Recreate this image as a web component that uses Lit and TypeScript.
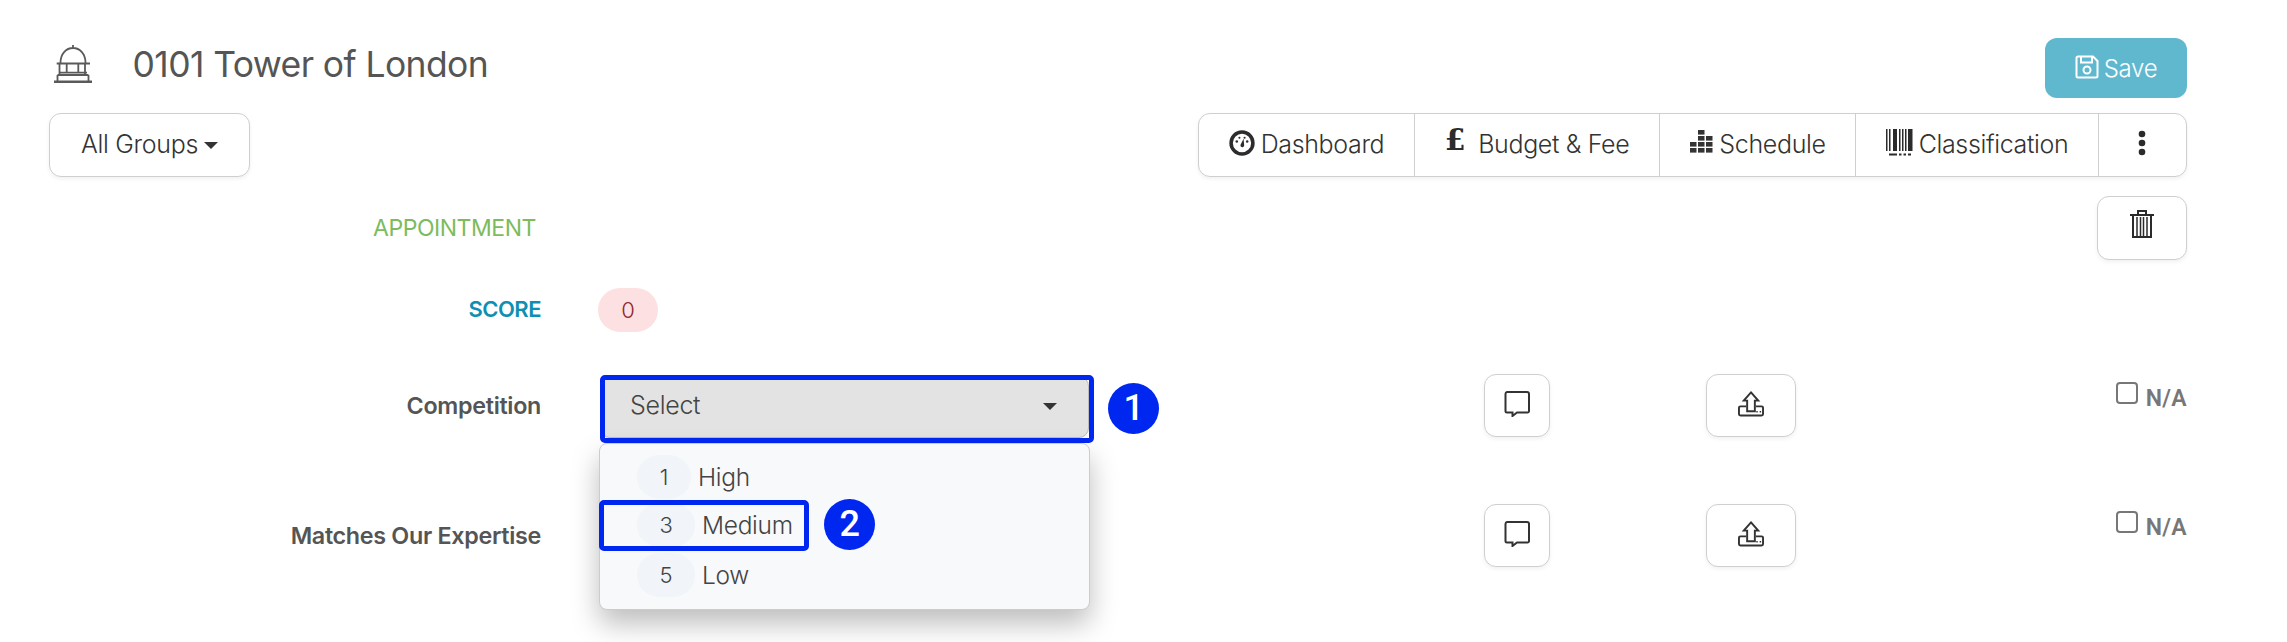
import { LitElement, html, css, svg } from "lit";
import { customElement } from "lit/decorators.js";

const building = html`<svg class="bld" width="38" height="38" viewBox="0 0 38 38" fill="none" stroke="#5a5a5a" stroke-width="1.800">
  <path d="M19 0v3M6.500 17.500C6.500 9 12 3 19 3s12.500 6 12.500 14.500M2.700 18.500h33.300M5.500 19v11M12.700 19v9M24.300 19v9M31 19v11M5 27.700h28M3.500 30h31M3.500 30v6M34.500 30v6" />
  <path d="M0 36.700h38" stroke-width="2.600" />
</svg>`;

const gauge = html`<svg width="26" height="26" viewBox="0 0 25 25"><circle cx="12.500" cy="12.500" r="10.500" fill="#fff" stroke="#2c2c2c" stroke-width="3.400"/>
  <g fill="#2c2c2c"><circle cx="7.500" cy="11" r="1.200"/><circle cx="10" cy="7.500" r="1"/><circle cx="17.500" cy="11" r="1.200"/><circle cx="15" cy="7.500" r="1"/><path d="M11 14.500l3-6 .6 6.500a1.800 1.800 0 0 1-3.600-.5z"/></g></svg>`;

const sched = html`<svg width="25" height="25" viewBox="0 0 25 25" fill="#333">
  ${[[9, 0], [9, 6], [9, 12], [9, 18], [17, 6], [17, 12], [17, 18], [1, 12], [1, 18]].map(
    ([x, y]) => svg`<rect x=${x} y=${y} width="6.500" height="4.600" />`
  )}
</svg>`;

const barcode = html`<svg width="28" height="27" viewBox="0 0 28 27" fill="#2b2b2b">
  <rect x="0" y="0" width="1.500" height="22"/><rect x="3" y="0" width="1.500" height="22"/><rect x="7" y="0" width="4" height="22"/><rect x="13" y="0" width="1.500" height="22"/><rect x="16" y="0" width="1.500" height="22"/><rect x="19" y="0" width="1.500" height="22"/><rect x="22" y="0" width="4.500" height="22"/>
  <rect x="3" y="24.500" width="8" height="2"/><rect x="13" y="24.500" width="2.500" height="2"/><rect x="17.500" y="24.500" width="2.500" height="2"/><rect x="22" y="24.500" width="3" height="2"/>
</svg>`;

const dots = html`<svg width="10" height="26" viewBox="0 0 10 26" fill="#2b2b2b"><circle cx="5" cy="4" r="3.300"/><circle cx="5" cy="13" r="3.300"/><circle cx="5" cy="22" r="3.300"/></svg>`;

const trash = html`<svg width="24" height="28" viewBox="0 0 24 28" fill="none" stroke="#2b2b2b" stroke-width="2">
  <path d="M0 5h24M8 4V1h8V4M3 6v21h18V6"/><path d="M7 7v20M10.500 7v20M13.500 7v20M17 7v20" stroke-width="1.500"/>
</svg>`;

const comment = html`<svg width="26" height="26" viewBox="0 0 26 26" fill="none" stroke="#333" stroke-width="2"><path d="M3 1h20a2 2 0 0 1 2 2v17a1.500 1.500 0 0 1-1.500 1.500H13l-4.500 3.500v-3.500H3A1.500 1.500 0 0 1 1.500 20V3A2 2 0 0 1 3 1z"/></svg>`;

const upload = html`<svg width="26" height="26" viewBox="0 0 27 27" fill="none" stroke="#333" stroke-width="2"><path d="M8.500 16H2.500a1.500 1.500 0 0 0-1.500 1.500v6.500a1.500 1.500 0 0 0 1.500 1.500h22a1.500 1.500 0 0 0 1.500-1.500v-6.500a1.500 1.500 0 0 0-1.500-1.500h-6"/><path d="M13.500 1.500L21 10h-3.500v11h-8V10H6z" fill="#fff"/><path d="M19 21.500h1.500M22.500 21.500h1.500" stroke-width="1.500"/></svg>`;

const floppy = html`<svg width="24" height="24" viewBox="0 0 24 24" fill="none" stroke="#fff" stroke-width="2"><path d="M3 1.500h15l4.500 4.500v15a1.500 1.500 0 0 1-1.500 1.500H3A1.500 1.500 0 0 1 1.500 21V3A1.500 1.500 0 0 1 3 1.500z"/><path d="M6 1.500v6h11v-6"/><circle cx="12" cy="15" r="3.500"/></svg>`;

@customElement("app-root")
export class AppRoot extends LitElement {
  static styles = css`
    :host {
      display: block;
      height: 642px;
      overflow: hidden;
      box-sizing: border-box;
      padding: 38px 100px 0 49px;
      background: #fff;
      font-family: Inter, "Liberation Sans", sans-serif;
      font-weight: 300;
      color: #333;
    }
    .head { display: flex; align-items: center; height: 60px; }
    .bld { margin-left: 5px; flex: none; margin-top: -8px; }
    .title { margin-left: 40.500px; font-size: 35.500px; line-height: 44px; margin-top: -6px; font-weight: 400; color: #555; letter-spacing: -0.600px; white-space: nowrap; }
    .save {
      margin-left: auto; width: 142px; height: 60px; box-sizing: border-box;
      background: #60b8cf; border-radius: 12px; color: #fff;
      display: flex; align-items: center; justify-content: center; gap: 5px;
      font-size: 24px; letter-spacing: -0.300px;
    }
    .save svg { margin-top: -2px; }
    .tools { display: flex; justify-content: space-between; margin-top: 15px; }
    .box {
      box-sizing: border-box; border: 1.500px solid #cfcfcf; border-radius: 12px; background: #fff;
      box-shadow: 0 2px 4px rgba(0, 0, 0, 0.06);
      display: flex; align-items: center; justify-content: center;
    }
    .groups { width: 201px; height: 64px; font-size: 25px; gap: 6px; letter-spacing: -0.300px; padding-bottom: 2px; }
    .caret { width: 0; height: 0; border-left: 7.500px solid transparent; border-right: 7.500px solid transparent; border-top: 7.500px solid #333; margin-top: 3px; }
    .tabs { display: flex; height: 64px; width: 989px; padding: 0; justify-content: flex-start; }
    .tab { display: flex; align-items: center; justify-content: center; height: 100%; gap: 5px; font-size: 25px; letter-spacing: -0.350px; border-right: 1.500px solid #cfcfcf; box-sizing: border-box; white-space: nowrap; padding-bottom: 2px; }
    .tab:last-child { border-right: 0; }
    .t1 { width: 216px; gap: 6px; }
    .t1 svg { margin-top: -3px; }
    .t2 { width: 245px; gap: 13px; }
    .t3 { width: 196px; }
    .t4 { width: 243px; }
    .t5 { flex: 1; padding-right: 2px; }
    .t5 svg { margin-top: -2px; }
    .pound { font-family: "DejaVu Serif", serif; font-weight: 700; font-size: 30px; line-height: 1; margin-top: -9px; color: #2b2b2b; }
    .t3 svg, .t4 svg { margin-top: -4px; }
    .row { display: flex; align-items: center; }
    .label { width: 492px; flex: none; text-align: right; white-space: nowrap; }
    .r-appt { margin-top: 19px; height: 64px; }
    .appt { width: 487px; color: #7dbb5b; font-weight: 400; font-size: 23px; letter-spacing: -0.450px; }
    .trash { width: 90px; height: 64px; margin-left: auto; padding-bottom: 8px; }
    .r-score { margin-top: 28px; height: 44px; }
    .score { color: #0f8fb2; font-weight: 600; font-size: 22px; letter-spacing: -0.500px; margin-top: -2px; }
    .pill { margin-left: 57px; width: 60px; height: 44px; border-radius: 22px; background: #fde0e1; color: #8f2730; font-size: 22px; display: flex; align-items: center; justify-content: center; }
    .r-q { height: 63px; }
    .r1 { margin-top: 42px; }
    .r2 { margin-top: 67px; }
    .q { font-weight: 600; color: #555; font-size: 23.300px; letter-spacing: -0.300px; }
    .sel {
      position: relative; margin: 2px 0 0 59px; width: 489px; height: 62px; box-sizing: border-box; flex: none;
      background: #e3e3e3; border-radius: 10px; border: 1px solid #bbb;
      display: flex; align-items: center; justify-content: space-between;
      padding: 0 30px 3px 29px; font-size: 25px; letter-spacing: -0.300px; color: #444;
    }
    .sel .caret { margin-right: 1px; border-left-width: 7.500px; border-right-width: 7.500px; border-top-width: 7px; margin-top: 2px; }
    .sel2 { background: #fff; }
    .c-btn { width: 66px; height: 63px; margin-left: 395px; flex: none; padding-bottom: 3px; }
    .u-btn { width: 90px; height: 63px; margin-left: 156px; flex: none; padding-bottom: 3px; }
    .na { margin-left: auto; display: flex; gap: 8px; color: #777; font-weight: 600; font-size: 23px; font-family: Roboto, sans-serif; letter-spacing: 0.300px; align-self: flex-start; margin-top: 8px; }
    .r2 .na { margin-top: 7px; }
    .chk { width: 22px; height: 22px; box-sizing: border-box; border: 2px solid #777; border-radius: 4px; background: #fff; }
    .na span { margin-top: 7px; line-height: 19px; }
    .ring {
      position: absolute; box-sizing: border-box; border: 5px solid #0027f0; border-radius: 5px; z-index: 5; pointer-events: none;
    }
    .ring1 { left: -1px; top: -2px; width: 494px; height: 68px; }
    .num {
      position: absolute; width: 51px; height: 51px; border-radius: 50%; background: #0027f0; color: #fff; z-index: 6;
      display: flex; align-items: center; justify-content: center;
      font-family: Roboto, sans-serif; font-weight: 500; font-size: 36px; line-height: 1;
    }
    .n1 { left: 507px; top: 6px; }
    .menu {
      position: absolute; left: -2px; top: 66px; width: 491px; height: 167px; box-sizing: border-box; z-index: 4;
      background: #f8f9fb; border: 1px solid #ccc; border-radius: 8px;
      box-shadow: 0 14px 28px rgba(0, 0, 0, 0.26);
      padding: 11px 0 0 37px; display: flex; flex-direction: column; gap: 4px; color: #444;
    }
    .item { display: flex; align-items: center; gap: 7px; height: 44px; font-size: 24.500px; letter-spacing: -0.300px; color: #444; }
    .item + .item + .item { margin-top: 2px; }
    .badge { height: 44px; width: 58px; border-radius: 22px; background: #f1f4f9; display: flex; align-items: center; justify-content: center; font-size: 22px; }
    .item:first-child .badge { width: 54px; }
    .m-ring { position: relative; }
    .ring2 { left: -38px; top: -3px; width: 210px; height: 51px; }
    .n2 { left: 187px; top: -4px; }
  `;

  render() {
    return html`
      <div class="head">
        ${building}
        <div class="title">0101 Tower of London</div>
        <div class="save">${floppy}Save</div>
      </div>
      <div class="tools">
        <div class="box groups">All Groups <i class="caret"></i></div>
        <div class="box tabs">
          <div class="tab t1">${gauge}Dashboard</div>
          <div class="tab t2"><span class="pound">£</span>Budget &amp; Fee</div>
          <div class="tab t3">${sched}Schedule</div>
          <div class="tab t4">${barcode}Classification</div>
          <div class="tab t5">${dots}</div>
        </div>
      </div>
      <div class="row r-appt">
        <div class="label appt">APPOINTMENT</div>
        <div class="box trash">${trash}</div>
      </div>
      <div class="row r-score">
        <div class="label score">SCORE</div>
        <div class="pill">0</div>
      </div>
      <div class="row r-q r1">
        <div class="label q">Competition</div>
        <div class="sel">
          Select <i class="caret"></i>
          <div class="ring ring1"></div>
          <div class="num n1">1</div>
          <div class="menu">
            <div class="item"><span class="badge">1</span>High</div>
            <div class="item m-ring">
              <span class="badge">3</span>Medium
              <div class="ring ring2"></div>
              <div class="num n2">2</div>
            </div>
            <div class="item"><span class="badge">5</span>Low</div>
          </div>
        </div>
        <div class="box c-btn">${comment}</div>
        <div class="box u-btn">${upload}</div>
        <label class="na"><i class="chk"></i><span>N/A</span></label>
      </div>
      <div class="row r-q r2">
        <div class="label q">Matches Our Expertise</div>
        <div class="sel sel2"></div>
        <div class="box c-btn">${comment}</div>
        <div class="box u-btn">${upload}</div>
        <label class="na"><i class="chk"></i><span>N/A</span></label>
      </div>
    `;
  }
}
